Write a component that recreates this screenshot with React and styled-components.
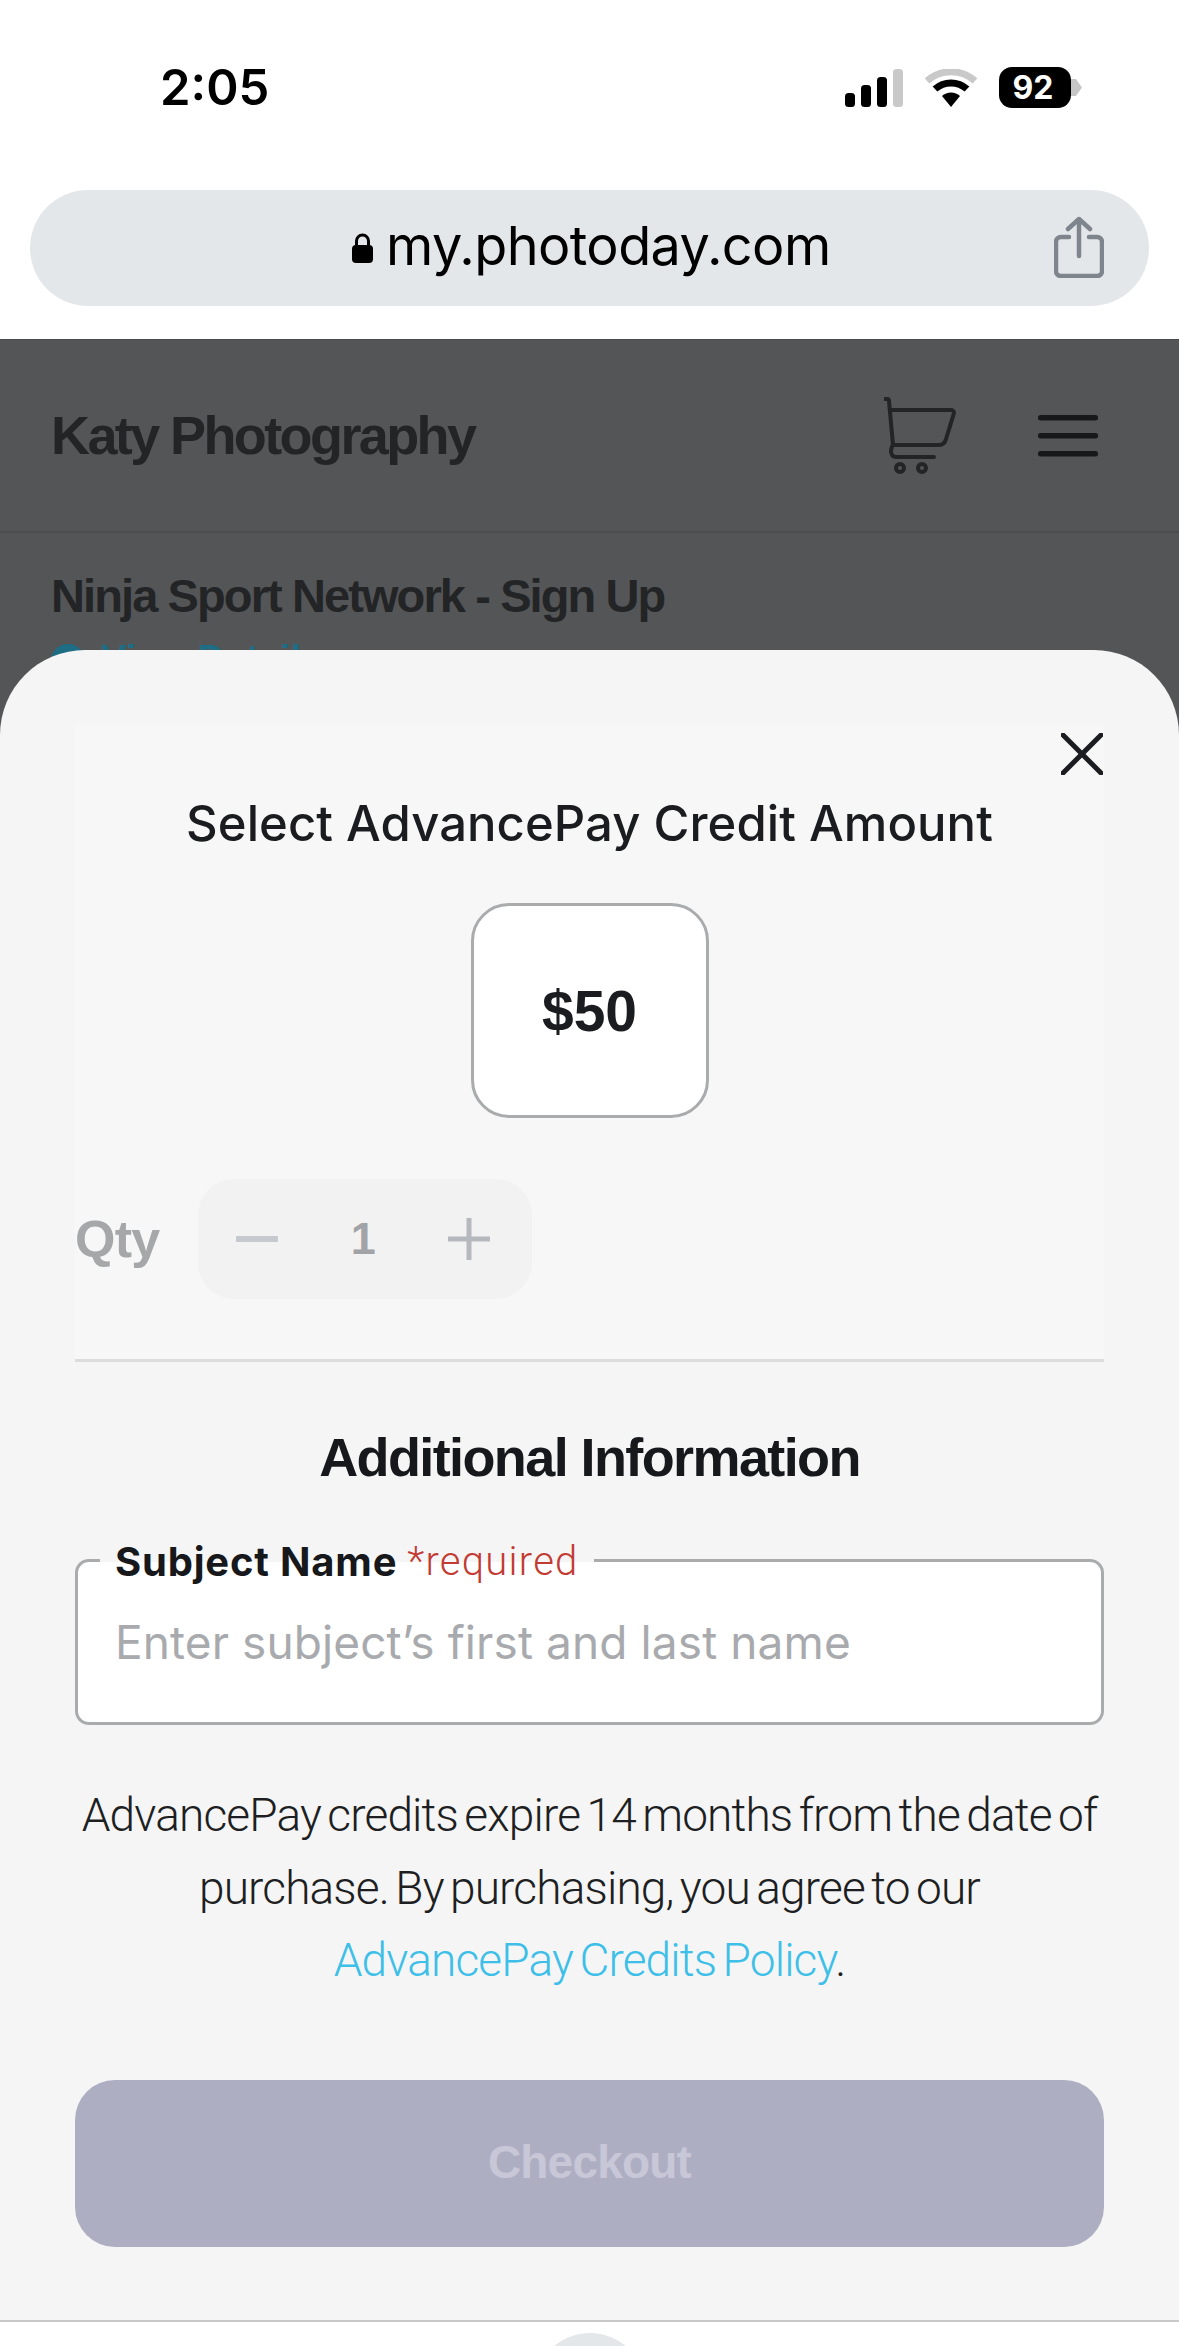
import styled, { createGlobalStyle } from "styled-components";

const Global = createGlobalStyle`
  html, body { margin: 0; padding: 0; background: #fff; }
  * { box-sizing: border-box; }
  body { font-family: "Liberation Sans", Arial, sans-serif; }
`;

const Page = styled.div`
  width: 1179px;
  height: 2346px;
  display: flex;
  flex-direction: column;
  overflow: hidden;
  background: #fff;
`;

const StatusBar = styled.div`
  height: 190px;
  padding: 60px 108px 0 160px;
  display: flex;
  justify-content: space-between;
  align-items: flex-start;
`;

const Time = styled.div`
  font-family: Inter, sans-serif;
  font-size: 49px;
  line-height: 56px;
  font-weight: 600;
  color: #000;
`;

const StatusIcons = styled.div`
  display: flex;
  align-items: center;
  gap: 22px;
  margin-top: 7px;
`;

const Battery = styled.div`
  position: relative;
  width: 72px;
  height: 41px;
  border-radius: 13px;
  background: #000;
  color: #fff;
  font-family: Inter, sans-serif;
  font-size: 32px;
  font-weight: 700;
  display: flex;
  align-items: center;
  justify-content: center;
  padding-right: 4px;
  &::after {
    content: "";
    position: absolute;
    right: -11px;
    top: 12px;
    width: 11px;
    height: 17px;
    background: #c6c6c6;
    clip-path: polygon(0 0, 45% 0, 100% 50%, 45% 100%, 0 100%);
  }
`;

const UrlWrap = styled.div`
  height: 149px;
  padding: 0 30px;
`;

const UrlBar = styled.div`
  position: relative;
  height: 116px;
  border-radius: 58px;
  background: #e4e7ea;
  display: flex;
  align-items: center;
  padding-left: 322px;
  gap: 13px;
`;

const UrlText = styled.div`
  font-family: Inter, sans-serif;
  font-size: 54px;
  color: #000;
  letter-spacing: -0.6px;
  padding-bottom: 6px;
`;

const ShareButton = styled.div`
  position: absolute;
  right: 45px;
  top: 26px;
  display: flex;
`;

const Backdrop = styled.div`
  position: relative;
  flex: 1;
  background: #545557;
  border-top: 1px solid #4a4b4d;
`;

const SiteHeader = styled.div`
  height: 193px;
  padding: 0 81px 0 51px;
  display: flex;
  align-items: center;
  border-bottom: 2px solid #4c4d4f;
`;

const SiteName = styled.div`
  flex: 1;
  font-size: 54px;
  font-weight: 700;
  letter-spacing: -2.6px;
  color: #232426;
  padding-bottom: 2px;
`;

const HeaderIcons = styled.div`
  display: flex;
  align-items: center;
  gap: 82px;
`;

const EventTitle = styled.div`
  padding: 36px 51px 0;
  font-size: 47px;
  line-height: 54px;
  font-weight: 700;
  letter-spacing: -1.9px;
  color: #232426;
`;

const ViewDetails = styled.div`
  display: flex;
  align-items: flex-start;
  gap: 16px;
  padding: 21px 51px 0;
  font-size: 38px;
  line-height: 30px;
  font-weight: 700;
  color: #1d6d85;
  &::before {
    content: "";
    width: 34px;
    height: 34px;
    border-radius: 50%;
    background: #1d6d85;
  }
`;

const Sheet = styled.div`
  position: absolute;
  left: 0;
  right: 0;
  bottom: 0;
  height: 1672px;
  padding: 75px 75px 0;
  background: #f5f5f6;
  border-radius: 85px 85px 0 0;
  border-bottom: 2px solid #c9c9c9;
`;

const CloseButton = styled.div`
  position: absolute;
  top: 83px;
  right: 76px;
  display: flex;
`;

const Panel = styled.div`
  height: 637px;
  padding-top: 69px;
  background: #f7f7f8;
  border-bottom: 3px solid #dcdcdd;
`;

const Title = styled.div`
  font-family: Inter, sans-serif;
  font-size: 49px;
  line-height: 60px;
  font-weight: 500;
  letter-spacing: 0.06px;
  color: #1b1c1f;
  text-align: center;
`;

const AmountCard = styled.div`
  width: 238px;
  height: 215px;
  margin: 49px auto 0;
  border: 3px solid #a9abad;
  border-radius: 38px;
  background: #fff;
  display: flex;
  align-items: center;
  justify-content: center;
  font-size: 57px;
  font-weight: 700;
  color: #1b1c1f;
`;

const QtyRow = styled.div`
  display: flex;
  align-items: center;
  gap: 39px;
  margin-top: 61px;
`;

const QtyLabel = styled.div`
  font-size: 52px;
  font-weight: 700;
  letter-spacing: -0.8px;
  color: #a5a7a9;
`;

const Stepper = styled.div`
  width: 334px;
  height: 120px;
  border-radius: 36px;
  background: #f2f2f3;
  display: flex;
  align-items: center;
  justify-content: space-between;
  padding: 0 42px 0 38px;
`;

const StepCount = styled.div`
  font-size: 45px;
  font-weight: 700;
  color: #a1a3a6;
`;

const SectionTitle = styled.div`
  margin-top: 65px;
  font-size: 54px;
  line-height: 60px;
  font-weight: 700;
  letter-spacing: -1.6px;
  color: #17181b;
  text-align: center;
`;

const Field = styled.div`
  position: relative;
  height: 166px;
  margin-top: 72px;
  padding-left: 37px;
  display: flex;
  align-items: center;
  border: 3px solid #a9abad;
  border-radius: 14px;
  background: #fff;
  font-family: Inter, sans-serif;
  font-size: 46px;
  line-height: 58px;
  letter-spacing: 0.1px;
  color: #a8aaae;
`;

const FieldLabel = styled.div`
  position: absolute;
  left: 22px;
  top: -23px;
  padding: 0 15px 0 15px;
  display: flex;
  gap: 10px;
  font-size: 40px;
  line-height: 46px;
  font-weight: 700;
  letter-spacing: 0.8px;
  color: #17181b;
  background: linear-gradient(#f5f5f6 50%, #fff 50%);
`;

const Required = styled.span`
  font-family: Roboto, sans-serif;
  font-weight: 300;
  letter-spacing: 1.25px;
  color: #c23b33;
`;

const Note = styled.p`
  margin: 54px 0 0;
  font-family: Roboto, sans-serif;
  font-size: 46px;
  line-height: 72.5px;
  font-weight: 300;
  letter-spacing: -0.85px;
  word-spacing: -4px;
  color: #1e1f22;
  text-align: center;
`;

const NoteLink = styled.span`
  color: #3ebfe8;
`;

const CheckoutButton = styled.div`
  height: 167px;
  margin-top: 83px;
  padding-bottom: 2px;
  border-radius: 40px;
  background: #aeaec3;
  display: flex;
  align-items: center;
  justify-content: center;
  font-size: 46px;
  font-weight: 700;
  letter-spacing: -0.8px;
  color: #c8c7d7;
`;

const BottomBar = styled.div`
  height: 24px;
  flex-shrink: 0;
  display: flex;
  justify-content: center;
  padding-top: 11px;
  overflow: hidden;
`;

const HomeCircle = styled.div`
  width: 112px;
  height: 112px;
  flex-shrink: 0;
  border-radius: 50%;
  background: #e4e7ea;
`;

const Signal = () => (
  <svg width="58" height="38" viewBox="0 0 58 38">
    <rect x="0" y="24" width="10" height="14" rx="3.5" fill="#000" />
    <rect x="16" y="16" width="10" height="22" rx="3.5" fill="#000" />
    <rect x="32" y="8" width="10" height="30" rx="3.5" fill="#000" />
    <rect x="48" y="0" width="10" height="38" rx="3.5" fill="#c9c9c9" />
  </svg>
);

const Wifi = () => (
  <svg width="52" height="38" viewBox="0 0 52 38">
    <path d="M2 12 A36 36 0 0 1 50 12" fill="none" stroke="#c9c9c9" strokeWidth="7" />
    <path d="M10 20 A24 24 0 0 1 42 20" fill="none" stroke="#000" strokeWidth="7" />
    <path d="M17 27 A13 13 0 0 1 35 27 L26 38 Z" fill="#000" />
  </svg>
);

const Lock = () => (
  <svg width="21" height="30" viewBox="0 0 21 30">
    <path d="M4.5 13 V8 a6 6 0 0 1 12 0 V13" fill="none" stroke="#000" strokeWidth="3" />
    <rect x="0" y="12" width="21" height="18" rx="4" fill="#000" />
  </svg>
);

const Share = () => (
  <svg width="50" height="62" viewBox="0 0 50 62" fill="none" stroke="#7f858c" strokeLinecap="round" strokeLinejoin="round">
    <path d="M15 21 H7 a5 5 0 0 0 -5 5 V55 a5 5 0 0 0 5 5 H43 a5 5 0 0 0 5 -5 V26 a5 5 0 0 0 -5 -5 H35" strokeWidth="4.5" />
    <path d="M25 40 V3 M14 13 L25 3 L36 13" strokeWidth="4.5" />
  </svg>
);

const Cart = () => (
  <svg width="72" height="78" viewBox="0 0 72 78" fill="none" stroke="#232426" strokeWidth="4" strokeLinecap="round" strokeLinejoin="round">
    <path d="M1 2 H3 a2 2 0 0 1 2 2 L9 48 C6 52 6 60 12 60 H50" />
    <path d="M7 13 H67 a3 3 0 0 1 3 3 L62 42 C61 46 58 48 55 48 H9" />
    <circle cx="16" cy="71" r="4" />
    <circle cx="38" cy="71" r="4" />
  </svg>
);

const Hamburger = () => (
  <svg width="60" height="42" viewBox="0 0 60 42" fill="#17181a">
    <rect y="0" width="60" height="5.5" rx="2.5" />
    <rect y="18" width="60" height="5.5" rx="2.5" />
    <rect y="36" width="60" height="5.5" rx="2.5" />
  </svg>
);

const CloseIcon = () => (
  <svg width="42" height="42" viewBox="0 0 42 42" stroke="#1b1c1f" strokeWidth="5" strokeLinecap="round">
    <path d="M2 2 L40 40 M40 2 L2 40" />
  </svg>
);

const Minus = () => (
  <svg width="42" height="6" viewBox="0 0 42 6">
    <rect width="42" height="6" rx="1" fill="#c6c9cd" />
  </svg>
);

const Plus = () => (
  <svg width="42" height="42" viewBox="0 0 42 42">
    <path d="M0 21 H42 M21 0 V42" stroke="#b5b8bd" strokeWidth="5" />
  </svg>
);

export default function App() {
  return (
    <Page>
      <Global />
      <StatusBar>
        <Time>2:05</Time>
        <StatusIcons>
          <Signal />
          <Wifi />
          <Battery>92</Battery>
        </StatusIcons>
      </StatusBar>
      <UrlWrap>
        <UrlBar>
          <Lock />
          <UrlText>my.photoday.com</UrlText>
          <ShareButton>
            <Share />
          </ShareButton>
        </UrlBar>
      </UrlWrap>
      <Backdrop>
        <SiteHeader>
          <SiteName>Katy Photography</SiteName>
          <HeaderIcons>
            <Cart />
            <Hamburger />
          </HeaderIcons>
        </SiteHeader>
        <EventTitle>Ninja Sport Network - Sign Up</EventTitle>
        <ViewDetails>View Details</ViewDetails>
        <Sheet>
          <CloseButton>
            <CloseIcon />
          </CloseButton>
          <Panel>
            <Title>Select AdvancePay Credit Amount</Title>
            <AmountCard>$50</AmountCard>
            <QtyRow>
              <QtyLabel>Qty</QtyLabel>
              <Stepper>
                <Minus />
                <StepCount>1</StepCount>
                <Plus />
              </Stepper>
            </QtyRow>
          </Panel>
          <SectionTitle>Additional Information</SectionTitle>
          <Field>
            <FieldLabel>
              <span>Subject Name</span>
              <Required>*required</Required>
            </FieldLabel>
            Enter subject’s first and last name
          </Field>
          <Note>
            AdvancePay credits expire 14 months from the date of purchase. By purchasing, you agree to our
            <br />
            <NoteLink>AdvancePay Credits Policy</NoteLink>.
          </Note>
          <CheckoutButton>Checkout</CheckoutButton>
        </Sheet>
      </Backdrop>
      <BottomBar>
        <HomeCircle />
      </BottomBar>
    </Page>
  );
}
